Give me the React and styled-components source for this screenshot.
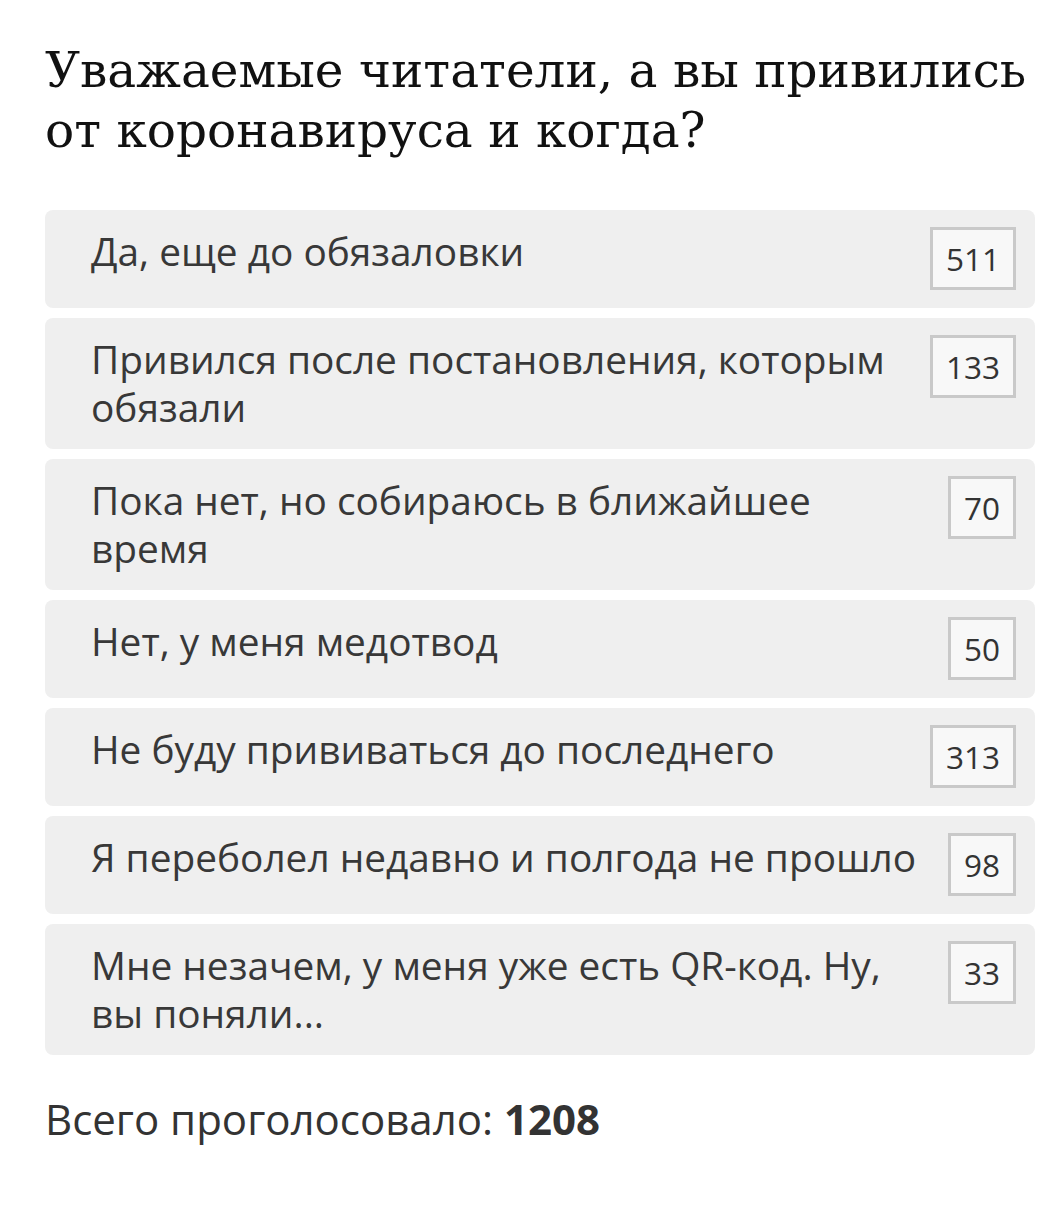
import React from "react";
import styled, { createGlobalStyle } from "styled-components";

const GlobalStyle = createGlobalStyle`
  html, body {
    margin: 0;
    padding: 0;
    background: #ffffff;
  }
`;

const answers = [
  { text: "Да, еще до обязаловки", votes: 511 },
  { text: "Привился после постановления, которым обязали", votes: 133 },
  { text: "Пока нет, но собираюсь в ближайшее время", votes: 70 },
  { text: "Нет, у меня медотвод", votes: 50 },
  { text: "Не буду прививаться до последнего", votes: 313 },
  { text: "Я переболел недавно и полгода не прошло", votes: 98 },
  { text: "Мне незачем, у меня уже есть QR-код. Ну, вы поняли...", votes: 33 },
];

const Page = styled.div`
  padding: 40px 7px 40px 45px;
  font-family: "Open Sans", "Noto Sans", sans-serif;
  color: #333;
`;

const Title = styled.h1`
  margin: 0 0 50px;
  font-family: "DejaVu Serif", "Liberation Serif", serif;
  font-weight: 400;
  font-size: 48.5px;
  line-height: 60px;
  color: #111;
`;

const List = styled.div`
  display: flex;
  flex-direction: column;
  gap: 10px;
`;

const Option = styled.div`
  display: flex;
  align-items: flex-start;
  justify-content: space-between;
  gap: 20px;
  background: #efefef;
  border-radius: 8px;
  padding: 17px 19px 18px 46px;
`;

const Label = styled.div`
  font-size: 38.8px;
  line-height: 48px;
  color: #383838;
`;

const Count = styled.div`
  flex-shrink: 0;
  height: 63px;
  box-sizing: border-box;
  padding: 0 13px;
  border: 3px solid #c9c9c9;
  background: #f8f8f8;
  display: flex;
  align-items: center;
  justify-content: center;
  font-size: 31.5px;
  color: #333;
`;

const Total = styled.div`
  margin-top: 38px;
  font-size: 42px;
  line-height: 52px;
  color: #333;
  b {
    font-weight: 700;
  }
`;

export default function App() {
  const total = answers.reduce((s, a) => s + a.votes, 0);
  return (
    <Page>
      <GlobalStyle />
      <Title>
        Уважаемые читатели, а вы привились
        <br />
        от коронавируса и когда?
      </Title>
      <List>
        {answers.map((a) => (
          <Option key={a.text}>
            <Label>{a.text}</Label>
            <Count>{a.votes}</Count>
          </Option>
        ))}
      </List>
      <Total>
        Всего проголосовало: <b>{total}</b>
      </Total>
    </Page>
  );
}
